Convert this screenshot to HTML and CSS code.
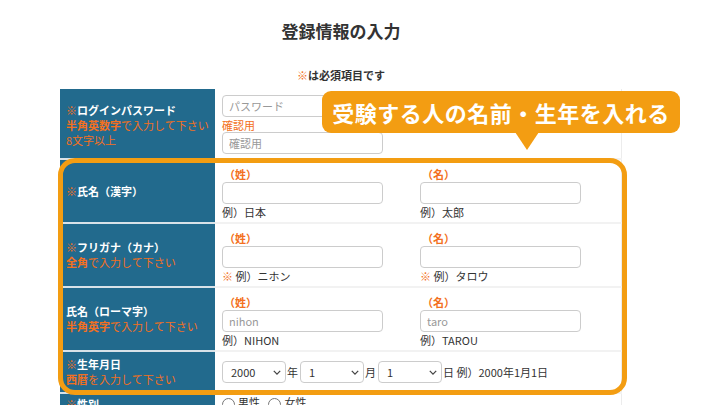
FILE: index.html
```html
<!DOCTYPE html>
<html lang="ja">
<head>
    <meta charset="UTF-8">
    <meta name="viewport" content="width=device-width, initial-scale=1.0">
    <title>登録情報の入力</title>
    <link rel="stylesheet" href="styles.css">
</head>
<body>

    <div class="container">
        <h1>登録情報の入力</h1>
        <p class="note"><span class="mark">※</span>は必須項目です</p>

        <!-- 登録フォーム -->
        <table class="form-table">
            <tr class="row-pass">
                <th>
                    <span class="req">※</span>ログインパスワード
                    <span class="sub"><b>半角英数字</b>で入力して下さい</span>
                    <span class="sub">8文字以上</span>
                </th>
                <td>
                    <input type="password" placeholder="パスワード">
                    <span class="confirm">確認用</span>
                    <input type="password" placeholder="確認用">
                </td>
            </tr>
            <tr class="row-name">
                <th><span class="req">※</span>氏名（漢字）</th>
                <td>
                    <div class="pair">
                        <div class="field">
                            <span class="part">（姓）</span>
                            <input type="text">
                            <span class="example">例）日本</span>
                        </div>
                        <div class="field">
                            <span class="part">（名）</span>
                            <input type="text">
                            <span class="example">例）太郎</span>
                        </div>
                    </div>
                </td>
            </tr>
            <tr class="row-name">
                <th>
                    <span class="req">※</span>フリガナ（カナ）
                    <span class="sub"><b>全角</b>で入力して下さい</span>
                </th>
                <td>
                    <div class="pair">
                        <div class="field">
                            <span class="part">（姓）</span>
                            <input type="text">
                            <span class="example"><span class="req">※</span> 例）ニホン</span>
                        </div>
                        <div class="field">
                            <span class="part">（名）</span>
                            <input type="text">
                            <span class="example"><span class="req">※</span> 例）タロウ</span>
                        </div>
                    </div>
                </td>
            </tr>
            <tr class="row-name">
                <th>
                    氏名（ローマ字）
                    <span class="sub"><b>半角英字</b>で入力して下さい</span>
                </th>
                <td>
                    <div class="pair">
                        <div class="field">
                            <span class="part">（姓）</span>
                            <input type="text" placeholder="nihon">
                            <span class="example">例）NIHON</span>
                        </div>
                        <div class="field">
                            <span class="part">（名）</span>
                            <input type="text" placeholder="taro">
                            <span class="example">例）TAROU</span>
                        </div>
                    </div>
                </td>
            </tr>
            <tr class="row-birth">
                <th>
                    <span class="req">※</span>生年月日
                    <span class="sub"><b>西暦</b>を入力して下さい</span>
                </th>
                <td>
                    <div class="birth">
                        <span class="select"><select><option>2000</option></select><svg viewBox="0 0 10 6"><path d="M1 1l4 4 4-4" /></svg></span>年
                        <span class="select"><select><option>1</option></select><svg viewBox="0 0 10 6"><path d="M1 1l4 4 4-4" /></svg></span>月
                        <span class="select"><select><option>1</option></select><svg viewBox="0 0 10 6"><path d="M1 1l4 4 4-4" /></svg></span>日 例）2000年1月1日
                    </div>
                </td>
            </tr>
            <tr class="row-sex">
                <th><span class="req">※</span>性別</th>
                <td>
                    <label><input type="radio" name="sex">男性</label>
                    <label><input type="radio" name="sex">女性</label>
                </td>
            </tr>
        </table>
    </div>

    <!-- 説明用の枠と吹き出し -->
    <div class="highlight"></div>
    <div class="balloon">受験する人の名前・生年を入れる</div>

</body>
</html>
```

FILE: styles.css
```css
body {
    font-family: "Noto Sans CJK JP", "Noto Sans", sans-serif;
    margin: 0;
    padding: 0;
    color: #333;
    background-color: #fff;
    overflow: hidden;
}

.container {
    width: 562px;
    margin-left: 60px;
}

h1 {
    text-align: center;
    font-size: 17px;
    margin: 19px 0 0;
    line-height: 24px;
}

.note {
    text-align: center;
    font-size: 11px;
    font-weight: bold;
    margin: 25px 0 7px;
    line-height: 14px;
}

.mark,
.req {
    color: #f37021;
}

.form-table {
    width: 100%;
    border-collapse: collapse;
    font-size: 11px;
    line-height: 15px;
}

.form-table th {
    width: 155px;
    background-color: #226a8d;
    color: #fff;
    text-align: left;
    padding: 0 0 0 6px;
    font-weight: bold;
    border-bottom: 2px solid #d8e2e8;
    box-sizing: border-box;
}

.form-table td {
    padding: 0 7px;
    border-bottom: 2px solid #f2f2f2;
    border-right: 1px solid #ececec;
    vertical-align: top;
    line-height: 14px;
}

.form-table .sub {
    display: block;
    color: #f37021;
    font-weight: normal;
}

.form-table .sub b {
    font-weight: bold;
}

input[type="text"],
input[type="password"] {
    display: block;
    width: 161px;
    height: 22px;
    box-sizing: border-box;
    border: 1px solid #ccc;
    border-radius: 4px;
    padding: 0 6px;
    font-size: 11px;
    font-family: inherit;
    margin: 0;
}

input::placeholder {
    color: #999;
}

.row-pass td {
    padding-top: 6px;
    padding-bottom: 4px;
}

.row-pass th {
    height: 70px;
    padding-top: 4px;
}

.confirm {
    display: block;
    color: #f37021;
    line-height: 14px;
    margin: 1px 0 0;
}

.row-name th {
    height: 64px;
}

.row-name td {
    padding-top: 7px;
}

.pair {
    display: flex;
    gap: 37px;
}

.field .part {
    display: block;
    color: #f37021;
    font-weight: bold;
    padding-left: 2px;
    margin-bottom: 1px;
}

.field .example {
    display: block;
    margin-top: 1px;
}

.row-birth th {
    height: 42px;
}

.row-birth td {
    vertical-align: middle;
}

.birth {
    display: flex;
    align-items: center;
}

.select {
    position: relative;
    margin-right: 1px;
}

.select select {
    appearance: none;
    -webkit-appearance: none;
    width: 64px;
    height: 22px;
    border: 1px solid #ccc;
    border-radius: 4px;
    background-color: #fff;
    padding: 0 8px;
    font-size: 11px;
    font-family: inherit;
    color: #333;
}

.select svg {
    position: absolute;
    right: 5px;
    top: 9px;
    width: 8px;
    height: 5px;
    fill: none;
    stroke: #444;
    stroke-width: 1.6;
}

.birth .select:not(:first-child) {
    margin-left: 2px;
}

.row-sex th {
    height: 30px;
    vertical-align: top;
    padding-top: 3px;
}

.row-sex td {
    padding-top: 1px;
}

.row-sex label {
    margin-right: 6px;
}

.row-sex input {
    margin: 0 3px 0 0;
    vertical-align: middle;
}

.highlight {
    position: absolute;
    left: 58px;
    top: 158px;
    width: 569px;
    height: 237px;
    box-sizing: border-box;
    border: 5px solid #f39d12;
    border-radius: 17px;
}

.balloon {
    position: absolute;
    left: 322px;
    top: 91px;
    width: 358px;
    height: 42px;
    box-sizing: border-box;
    background-color: #f39d12;
    border-radius: 9px;
    color: #fff;
    font-size: 22px;
    font-weight: bold;
    line-height: 42px;
    text-align: center;
    letter-spacing: 0.5px;
}

.balloon::after {
    content: "";
    position: absolute;
    left: 193px;
    top: 41px;
    border-left: 12px solid transparent;
    border-right: 12px solid transparent;
    border-top: 18px solid #f39d12;
}
```
